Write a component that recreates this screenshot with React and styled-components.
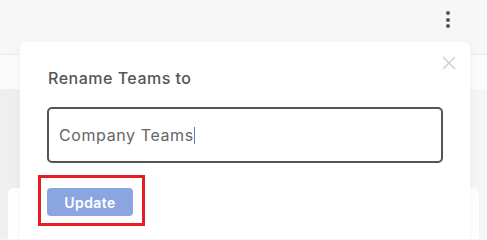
import React from "react";
import styled, { createGlobalStyle } from "styled-components";

const Global = createGlobalStyle`
  html, body { margin: 0; padding: 0; }
  body {
    font-family: Inter, "Open Sans", Arial, sans-serif;
    background: #f4f4f4;
    -webkit-font-smoothing: antialiased;
  }
`;

const Page = styled.div`
  position: relative;
  width: 487px;
  height: 239px;
  overflow: hidden;
  background: #f4f4f4;
`;

const Header = styled.header`
  height: 55px;
  background: #f7f7f7;
  border-bottom: 1px solid #ebebeb;
  display: flex;
  justify-content: flex-end;
  align-items: flex-start;
  padding: 11px 37px 0 0;
  box-sizing: border-box;
`;

const Kebab = styled.button`
  display: flex;
  flex-direction: column;
  gap: 2.5px;
  padding: 0;
  border: 0;
  background: none;
`;

const Dot = styled.span`
  width: 4px;
  height: 4px;
  border-radius: 50%;
  background: #555;
`;

const Band = styled.div`
  height: 34px;
  background: #fbfbfb;
`;

const Body = styled.div`
  padding: 99px 8px 0 8px;
  background: linear-gradient(90deg, #efefef 0%, #f5f5f5 100%);
  height: 200px;
`;

const Card = styled.div`
  background: #fff;
  border-radius: 6px;
  height: 120px;
`;

const Modal = styled.div`
  position: absolute;
  left: 20px;
  top: 42px;
  width: 450px;
  height: 230px;
  background: #fff;
  border-radius: 6px;
  box-shadow: 0 2px 10px rgba(0, 0, 0, 0.05);
  padding: 25px 27px 0 27px;
  box-sizing: border-box;
  display: flex;
  flex-direction: column;
  align-items: flex-start;
`;

const Close = styled.button`
  position: absolute;
  top: 14px;
  right: 14px;
  width: 14px;
  height: 14px;
  padding: 0;
  border: 0;
  background: none;
  display: flex;
`;

const Title = styled.h2`
  margin: 0 0 0 1px;
  font-size: 16px;
  line-height: 22px;
  font-weight: 500;
  letter-spacing: 0.5px;
  color: #555;
`;

const Field = styled.div`
  margin-top: 18px;
  width: 100%;
  height: 56px;
  box-sizing: border-box;
  border: 2px solid #555;
  border-radius: 5px;
  display: flex;
  align-items: center;
  padding: 0 0 0 10px;
  font-size: 16px;
  letter-spacing: 0.6px;
  color: #666;
`;

const Caret = styled.span`
  display: inline-block;
  width: 1px;
  height: 17px;
  background: #5a78d6;
  margin-left: 0;
`;

const ButtonWrap = styled.div`
  position: relative;
  margin-top: 25px;
  &::after {
    content: "";
    position: absolute;
    left: -9px;
    top: -13px;
    right: -12px;
    bottom: -10px;
    border: 3px solid #e81c24;
  }
`;

const Button = styled.button`
  width: 86px;
  height: 28px;
  border: 0;
  border-radius: 4px;
  background: #8aa5e0;
  color: #fff;
  font-family: inherit;
  font-size: 14px;
  font-weight: 600;
  letter-spacing: 0.4px;
  padding: 0;
`;

export default function App() {
  return (
    <>
      <Global />
      <Page>
        <Header>
          <Kebab aria-label="More">
            <Dot />
            <Dot />
            <Dot />
          </Kebab>
        </Header>
        <Band />
        <Body>
          <Card />
        </Body>
        <Modal>
          <Close aria-label="Close">
            <svg width="14" height="14" viewBox="0 0 14 14">
              <path d="M1 1L13 13M13 1L1 13" stroke="#cfcfcf" strokeWidth="1.5" />
            </svg>
          </Close>
          <Title>Rename Teams to</Title>
          <Field>
            Company Teams
            <Caret />
          </Field>
          <ButtonWrap>
            <Button>Update</Button>
          </ButtonWrap>
        </Modal>
      </Page>
    </>
  );
}
